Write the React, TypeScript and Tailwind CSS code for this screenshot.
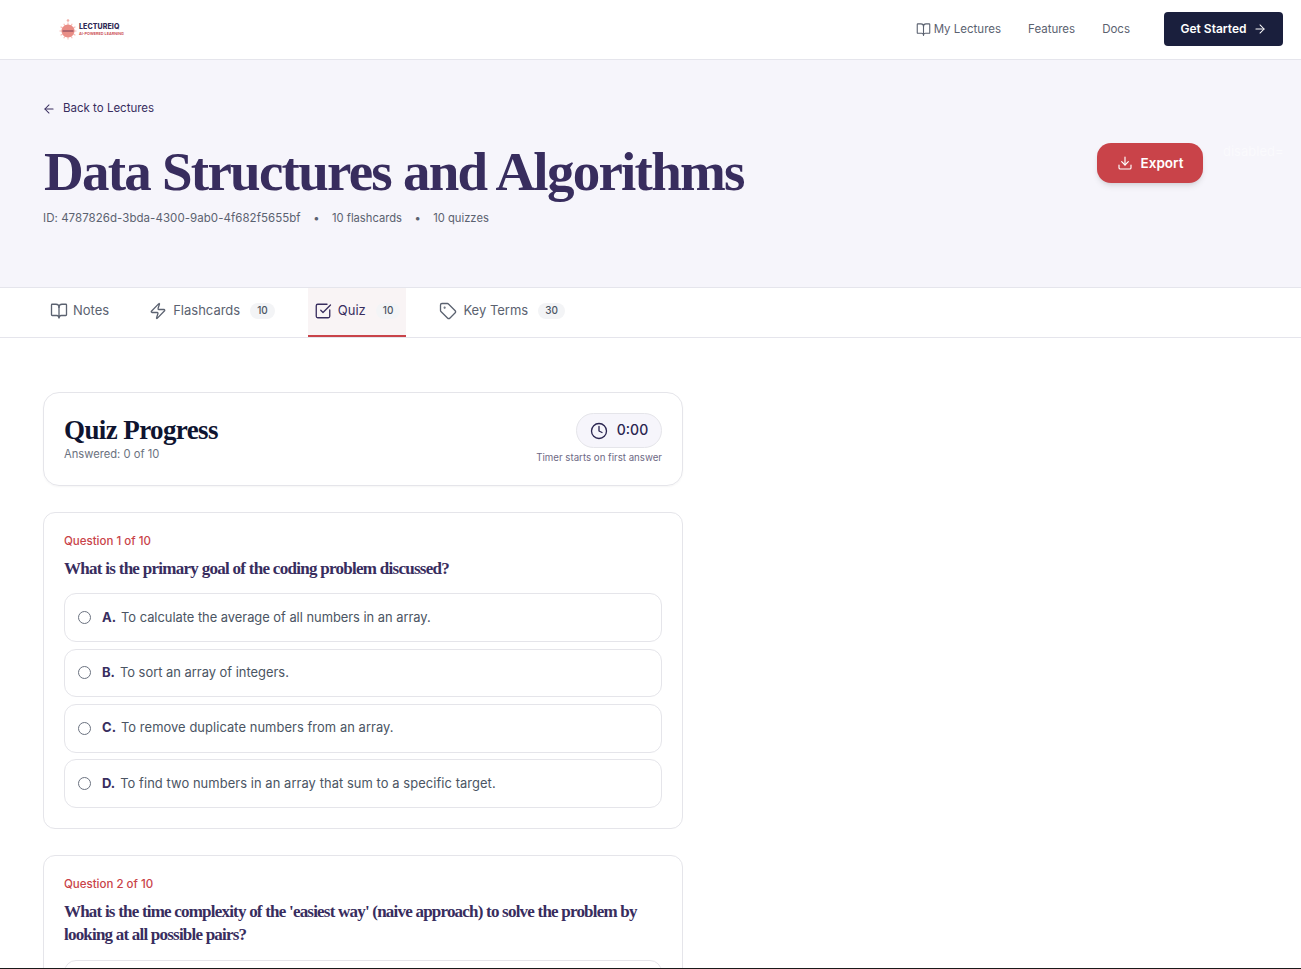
import { ArrowLeft, ArrowRight, BookOpen, CheckSquare, Clock, Download, Tag, Zap } from "lucide-react";

const sans = "font-['Inter','Liberation_Sans',sans-serif]";
const serif = "font-['Liberation_Serif',serif]";

function Logo() {
  const rays = Array.from({ length: 12 }, (_, i) => i * 30);
  return (
    <div className="flex items-center gap-[2px] ml-[59px] mt-[1px]">
      <svg width="18" height="24" viewBox="0 0 18 24">
        {rays.map((r) => (
          <line key={r} x1="9" y1="13" x2="9" y2="4.5" stroke="#f6b8b2" strokeWidth="1" transform={`rotate(${r} 9 13)`} />
        ))}
        <circle cx="9" cy="2.5" r="1.3" fill="#f0b0a9" />
        <circle cx="9" cy="13" r="6.5" fill="#e98d86" />
        <rect x="3.5" y="12.2" width="11" height="1.6" fill="#a35a68" />
      </svg>
      <div className="flex flex-col leading-none mb-[2px]">
        <span className={`${sans} text-[7px] font-extrabold text-[#2f2a55] leading-[8px] tracking-[0.1px]`}>LECTUREIQ</span>
        <span className={`${sans} text-[3.8px] font-semibold text-[#c9444a] leading-[5px] whitespace-nowrap`}>AI-POWERED LEARNING</span>
      </div>
    </div>
  );
}

function Tab({ icon, label, count, active, tight }: { icon: React.ReactNode; label: string; count?: number; active?: boolean; tight?: boolean }) {
  return (
    <div className={`flex items-center h-[49px] px-[6px] pb-[2px] border-b-2 ${tight ? "gap-[5px] pr-[7px]" : "gap-[6px]"} ${active ? "bg-[#f9f4f5] border-[#c94349] text-[#382d5e]" : "border-transparent text-[#5b6270]"}`}>
      {icon}
      <span className="text-[13px]">{label}</span>
      {count !== undefined && (
        <span className="ml-[4px] h-[16px] px-[7px] rounded-full bg-[#f3f4f6] text-[10px] font-medium text-[#4b5563] flex items-center">{count}</span>
      )}
    </div>
  );
}

function Option({ letter, text, mb, cls }: { letter: string; text: string; mb?: boolean; cls?: string }) {
  return (
    <div className={`flex items-center h-[48.8px] border border-[#e5e5ea] rounded-xl pl-[13px] ${mb ? "mb-[6.4px]" : ""}`}>
      <span className="w-[13px] h-[13px] rounded-full border border-[#6b7280] bg-white shrink-0" />
      <span className="ml-[11px] text-[13px] font-bold text-[#382d5e]">{letter}.</span>
      <span className={`ml-[5px] text-[12.9px] text-[#4b5563] ${cls ?? ""}`}>{text}</span>
    </div>
  );
}

export default function App() {
  return (
    <div className={`${sans} bg-white`}>
      <div className="h-[968px] overflow-hidden">
        <nav className="h-[60px] border-b border-[#e5e5ec] flex items-center justify-between pr-[18px] bg-white">
          <Logo />
          <div className="flex items-center">
            <div className="flex items-center gap-[3px] text-[11.5px] text-[#5b6270]">
              <BookOpen size={15} strokeWidth={1.75} />
              <span>My Lectures</span>
            </div>
            <span className="ml-[27px] text-[11.5px] text-[#5b6270]">Features</span>
            <span className="ml-[27px] text-[11.5px] text-[#5b6270]">Docs</span>
            <button className="ml-[34px] mb-[2px] h-[34px] w-[119px] rounded bg-[#1a1f3d] text-white text-[12px] font-semibold flex items-center justify-center gap-[6px]">
              Get Started <ArrowRight size={14} strokeWidth={1.75} />
            </button>
          </div>
        </nav>

        <header className="h-[228px] bg-[#f6f5fb] border-b border-[#e5e5ec] pl-[43px] pr-[98px] pt-[40px]">
          <div className="flex items-center gap-[7px] -ml-[1px] text-[11.5px] text-[#382d5e]">
            <ArrowLeft size={14} strokeWidth={1.75} />
            <span>Back to Lectures</span>
          </div>
          <div className="flex items-start justify-between mt-[22px]">
            <h1 className={`${serif} ml-[1px] text-[55px] leading-[66px] font-bold text-[#382d5e] tracking-[-1.75px] whitespace-nowrap`}>Data Structures and Algorithms</h1>
            <button className="relative mt-[4px] h-[40px] w-[106px] pb-[1px] rounded-[14px] bg-[#c94349] text-white text-[13.5px] font-semibold flex items-center justify-center gap-2 shadow-md">
              <Download size={16} strokeWidth={1.75} />
              Export
              <span className="absolute left-[126px] top-[-1px] text-[13px] font-normal text-white/50 whitespace-nowrap">disabled=</span>
            </button>
          </div>
          <div className="flex items-center text-[11.2px] text-[#5b6270] mt-[5px]">
            <span className="text-[11.5px] tracking-[0.05px]">ID: 4787826d-3bda-4300-9ab0-4f682f5655bf</span>
            <span className="mx-[12.5px]">•</span>
            <span>10 flashcards</span>
            <span className="mx-[12.5px]">•</span>
            <span>10 quizzes</span>
          </div>
        </header>

        <div className="h-[50px] border-b border-[#e5e5ec] flex items-start gap-[27px] pl-[44px]">
          <Tab tight icon={<BookOpen size={18} strokeWidth={1.75} />} label="Notes" />
          <Tab icon={<Zap size={18} strokeWidth={1.75} />} label="Flashcards" count={10} />
          <Tab icon={<CheckSquare size={18} strokeWidth={1.75} />} label="Quiz" count={10} active />
          <Tab icon={<Tag size={18} strokeWidth={1.75} />} label="Key Terms" count={30} />
        </div>

        <main className="pl-[43px] pt-[54px] flex flex-col gap-[26px]">
          <section className="w-[640px] h-[94px] border border-[#e5e5ea] rounded-2xl shadow-[0_1px_2px_rgba(0,0,0,0.04)] px-[20px] flex items-start justify-between">
            <div className="pt-[20px]">
              <div className={`${serif} text-[27px] leading-[34px] font-bold text-[#0f1430] tracking-[-0.6px]`}>Quiz Progress</div>
              <div className="text-[11.2px] text-[#6b7280] leading-[14px]">Answered: 0 of 10</div>
            </div>
            <div className="pt-[20px] flex flex-col items-end">
              <div className="h-[35px] w-[86px] rounded-full border border-[#e5e5ea] bg-[#f6f5fb] flex items-center justify-center gap-[9px] text-[#2a2550]">
                <Clock size={18} strokeWidth={1.75} />
                <span className="text-[14px] font-medium -mt-[2px]">0:00</span>
              </div>
              <div className="mt-[3px] text-[9.7px] text-[#6e6a85]">Timer starts on first answer</div>
            </div>
          </section>

          <section className="w-[640px] h-[317px] border border-[#e5e5ea] rounded-xl px-[20px] pt-[20px]">
            <div className="text-[11.5px] font-medium text-[#c94349] leading-[16px]">Question 1 of 10</div>
            <div className={`${serif} mt-[8px] text-[17px] leading-[24px] font-bold text-[#382d5e] tracking-[-0.72px]`}>What is the primary goal of the coding problem discussed?</div>
            <div className="mt-[12.4px]">
              <Option mb letter="A" text="To calculate the average of all numbers in an array." cls="tracking-[-0.02px]" />
              <Option mb letter="B" text="To sort an array of integers." />
              <Option mb letter="C" text="To remove duplicate numbers from an array." cls="tracking-[0.07px]" />
              <Option letter="D" text="To find two numbers in an array that sum to a specific target." cls="tracking-[0.08px]" />
            </div>
          </section>

          <section className="w-[640px] h-[300px] border border-[#e5e5ea] rounded-xl px-[20px] pt-[20px]">
            <div className="text-[11.5px] font-medium text-[#c94349] leading-[16px]">Question 2 of 10</div>
            <div className={`${serif} mt-[8px] text-[17px] leading-[23px] font-bold text-[#382d5e] tracking-[-0.79px]`}>What is the time complexity of the 'easiest way' (naive approach) to solve the problem by looking at all possible pairs?</div>
            <div className="mt-[14px] h-[49px] border border-[#e5e5ea] rounded-xl" />
          </section>
        </main>
      </div>
      <div className="h-[1px] bg-[#1a1a1a]" />
    </div>
  );
}
